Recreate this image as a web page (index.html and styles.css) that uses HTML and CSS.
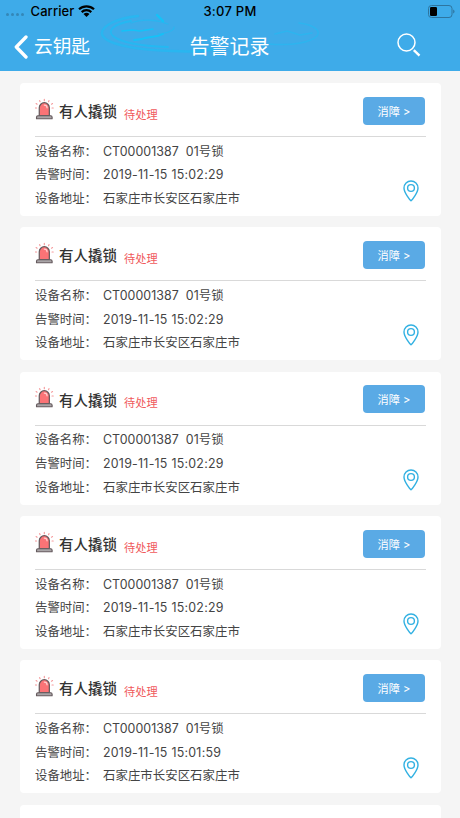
FILE: index.html
```html
<!DOCTYPE html>
<html lang="zh-CN">
<head>
    <meta charset="UTF-8">
    <meta name="viewport" content="width=device-width, initial-scale=1.0">
    <title>告警记录</title>
    <link rel="stylesheet" href="styles.css">
</head>
<body>
    <!-- Shared icons -->
    <svg class="icon-defs" width="0" height="0">
        <symbol id="alarm" viewBox="0 0 20 22">
            <path d="M4.500 18V9.700a5.300 5.300 0 0 1 10.600 0V18z" fill="#fb7376" stroke="#655a5d" stroke-width="1.300"/>
            <path d="M9.800 6.800c1.800 0 2.900 1.200 2.900 3" fill="none" stroke="#ffd0d0" stroke-width="1.300" stroke-linecap="round"/>
            <path d="M1.600 21.300v-1.700q0-1.500 1.500-1.500h13.400q1.500 0 1.500 1.500v1.700z" fill="#a9a5a7" stroke="#655a5d" stroke-width="1.200" stroke-linejoin="round"/>
            <path d="M9.800 .7v1.500M4.800 2.200l.6 1.100M14.800 2.200l-.6 1.100M1.200 5.300l1 .6M18.400 5.300l-1 .6M.4 10h1.300M17.900 10h1.300" stroke="#f69a9c" stroke-width="1.200" stroke-linecap="round"/>
        </symbol>
        <symbol id="pin" viewBox="0 0 16 22">
            <path d="M8 20.800C7 20 1 12.600 1 8a7 7 0 0 1 14 0c0 4.600-6 12-7 12.800z" fill="none" stroke="#32b1e2" stroke-width="1.400"/>
            <circle cx="8" cy="8" r="3.400" fill="none" stroke="#32b1e2" stroke-width="1.400"/>
        </symbol>
    </svg>

    <header class="header">
        <svg class="ripple" viewBox="0 0 230 60" width="230" height="60">
            <g fill="none" stroke="#14c2f8" stroke-linecap="round">
                <path d="M38 16C17 18 1 26 2 34c2 10 33 16 70 17 20 1 34 0 43-2" stroke-width="2.500" opacity=".5"/>
                <path d="M31 21C13 24 7 31 13 36c8 7 29 10 55 11" stroke-width="1.800" opacity=".6"/>
                <path d="M22 31l10-1 8 1 13-2" stroke-width="1.500"/>
                <path d="M34 40l8-1 3-1 13-2 5-2" stroke-width="1.800"/>
                <path d="M68 24c-13-5-27-5-37-1M58 34c10-1 16-3 16-7" stroke-width="1.200" opacity=".5"/>
                <path d="M57 15l6 6" stroke-width="2.400"/>
                <path d="M175 34l12-3 13 4 12-2M169 44c25 2 42-2 48-8 4-5-2-11-18-13" stroke-width="1.500" opacity=".4"/>
                <path d="M150 17h2" stroke-width="2" opacity=".7"/>
            </g>
        </svg>
        <div class="status-bar">
            <div class="status-left">
                <span class="signal"><i></i><i></i><i></i><i></i></span>
                <span>Carrier</span>
                <svg class="wifi" viewBox="0 0 17 12" width="17" height="12">
                    <path d="M1 4.300a11 11 0 0 1 15 0M3.700 7.100a7 7 0 0 1 9.600 0" fill="none" stroke="#000" stroke-width="2.200"/>
                    <path d="M5.500 9q3-2.500 6 0l-3 3z"/>
                </svg>
            </div>
            <span class="clock">3:07 PM</span>
            <svg class="battery" viewBox="0 0 27 13" width="27" height="13">
                <rect x=".5" y=".5" width="23.500" height="12" rx="3" fill="none" stroke="#2e759f"/>
                <rect x="2" y="2" width="7" height="9" rx="1.300"/>
                <path d="M25.200 4.500q1.300.500 1.300 2t-1.300 2z" fill="#2e759f"/>
            </svg>
        </div>
        <nav class="nav-bar">
            <a class="back">
                <svg viewBox="0 0 14 24" width="14" height="24">
                    <path d="M12 2L2.300 12 12 22" fill="none" stroke="#fff" stroke-width="3.300" stroke-linecap="round" stroke-linejoin="round"/>
                </svg>
                <span>云钥匙</span>
            </a>
            <h1>告警记录</h1>
            <svg class="search" viewBox="0 0 24 24" width="24" height="24">
                <circle cx="9.500" cy="9.500" r="8.500" fill="none" stroke="#fff" stroke-width="1.500"/>
                <path d="M16.800 17.200l5.700 5.500" stroke="#fff" stroke-width="2.400"/>
            </svg>
        </nav>
    </header>

    <main class="list">
        <section class="card">
            <div class="card-head">
                <svg class="alarm"><use href="#alarm"/></svg>
                <h2>有人撬锁</h2>
                <span class="state">待处理</span>
                <button class="clear-btn">消障 &gt;</button>
            </div>
            <div class="card-body">
                <dl>
                    <dt>设备名称：</dt><dd>CT00001387&nbsp; 01号锁</dd>
                    <dt>告警时间：</dt><dd class="time">2019-11-15 15:02:29</dd>
                    <dt>设备地址：</dt><dd>石家庄市长安区石家庄市</dd>
                </dl>
                <svg class="pin"><use href="#pin"/></svg>
            </div>
        </section>

        <section class="card">
            <div class="card-head">
                <svg class="alarm"><use href="#alarm"/></svg>
                <h2>有人撬锁</h2>
                <span class="state">待处理</span>
                <button class="clear-btn">消障 &gt;</button>
            </div>
            <div class="card-body">
                <dl>
                    <dt>设备名称：</dt><dd>CT00001387&nbsp; 01号锁</dd>
                    <dt>告警时间：</dt><dd class="time">2019-11-15 15:02:29</dd>
                    <dt>设备地址：</dt><dd>石家庄市长安区石家庄市</dd>
                </dl>
                <svg class="pin"><use href="#pin"/></svg>
            </div>
        </section>

        <section class="card">
            <div class="card-head">
                <svg class="alarm"><use href="#alarm"/></svg>
                <h2>有人撬锁</h2>
                <span class="state">待处理</span>
                <button class="clear-btn">消障 &gt;</button>
            </div>
            <div class="card-body">
                <dl>
                    <dt>设备名称：</dt><dd>CT00001387&nbsp; 01号锁</dd>
                    <dt>告警时间：</dt><dd class="time">2019-11-15 15:02:29</dd>
                    <dt>设备地址：</dt><dd>石家庄市长安区石家庄市</dd>
                </dl>
                <svg class="pin"><use href="#pin"/></svg>
            </div>
        </section>

        <section class="card">
            <div class="card-head">
                <svg class="alarm"><use href="#alarm"/></svg>
                <h2>有人撬锁</h2>
                <span class="state">待处理</span>
                <button class="clear-btn">消障 &gt;</button>
            </div>
            <div class="card-body">
                <dl>
                    <dt>设备名称：</dt><dd>CT00001387&nbsp; 01号锁</dd>
                    <dt>告警时间：</dt><dd class="time">2019-11-15 15:02:29</dd>
                    <dt>设备地址：</dt><dd>石家庄市长安区石家庄市</dd>
                </dl>
                <svg class="pin"><use href="#pin"/></svg>
            </div>
        </section>

        <section class="card">
            <div class="card-head">
                <svg class="alarm"><use href="#alarm"/></svg>
                <h2>有人撬锁</h2>
                <span class="state">待处理</span>
                <button class="clear-btn">消障 &gt;</button>
            </div>
            <div class="card-body">
                <dl>
                    <dt>设备名称：</dt><dd>CT00001387&nbsp; 01号锁</dd>
                    <dt>告警时间：</dt><dd class="time">2019-11-15 15:01:59</dd>
                    <dt>设备地址：</dt><dd>石家庄市长安区石家庄市</dd>
                </dl>
                <svg class="pin"><use href="#pin"/></svg>
            </div>
        </section>

        <!-- Top edge of the next card -->
        <section class="card card-peek"></section>
    </main>
</body>
</html>
```
FILE: styles.css
```css
* {
    box-sizing: border-box;
}

body {
    font-family: Inter, "Noto Sans CJK SC", sans-serif;
    margin: 0;
    display: flex;
    flex-direction: column;
    height: 100vh;
    background: #f5f5f5;
    color: #444;
}

h1, h2, dl, dd {
    margin: 0;
}

.icon-defs {
    position: absolute;
}

/* Header */
.header {
    position: relative;
    flex: none;
    height: 71px;
    background: #3eabe9;
}

.ripple {
    position: absolute;
    left: 100px;
    top: 0;
}

.status-bar {
    position: relative;
    display: grid;
    grid-template-columns: 1fr auto 1fr;
    align-items: center;
    height: 22px;
    padding: 0 6px;
    color: #000;
    font-size: 13px;
    font-weight: 500;
}

.status-left {
    display: flex;
    align-items: center;
    letter-spacing: 0.1px;
}

.signal {
    display: flex;
    gap: 2px;
    width: 24.5px;
    padding-top: 7px;
}

.signal i {
    width: 3px;
    height: 3px;
    border-radius: 50%;
    background: #3487b8;
}

.wifi {
    margin-left: 4px;
}

.clock {
    letter-spacing: 0.25px;
}

.battery {
    justify-self: end;
    margin-right: -1px;
}

.nav-bar {
    position: relative;
    display: grid;
    grid-template-columns: 1fr auto 1fr;
    align-items: center;
    height: 50px;
    padding: 0 39px 0 14px;
    color: #fff;
}

.back {
    display: flex;
    align-items: center;
    gap: 6px;
    font-size: 18.7px;
    line-height: 28px;
}

.nav-bar h1 {
    margin-left: 24px;
    font-size: 20px;
    font-weight: 400;
    line-height: 28px;
}

.search {
    justify-self: end;
    margin-bottom: 4px;
}

/* Alarm list */
.list {
    display: flex;
    flex: 1;
    flex-direction: column;
    gap: 11.35px;
    min-height: 0;
    padding: 12px 19.5px 0 20px;
}

.card {
    flex: none;
    height: 133px;
    padding: 0 15px;
    background: #fff;
    border-radius: 4px;
}

.card-peek {
    flex: 1;
    height: auto;
    border-radius: 4px 4px 0 0;
}

.card-head {
    display: flex;
    align-items: center;
    height: 54px;
    padding-top: 2px;
    border-bottom: 1px solid #d9d9d9;
}

.alarm {
    width: 19px;
    height: 22px;
    margin-bottom: 4px;
}

.card-head h2 {
    margin-left: 5px;
    font-size: 14.5px;
    font-weight: 500;
    color: #333;
}

.state {
    margin: 6px 0 0 7px;
    font-size: 11.2px;
    color: #f0595c;
}

.clear-btn {
    width: 62px;
    height: 28px;
    margin: 0 0.5px 0 auto;
    padding: 0;
    border: 0;
    border-radius: 4px;
    background: #5aaae5;
    color: #fff;
    font-family: inherit;
    font-size: 11.2px;
}

.card-body {
    display: flex;
    justify-content: space-between;
    padding-top: 2.5px;
}

.card-body dl {
    display: grid;
    grid-template-columns: 68px auto;
    font-size: 12.4px;
    line-height: 23.8px;
}

.card-body dt {
    font-family: "Noto Sans CJK SC", sans-serif;
}

.card-body dd {
    letter-spacing: 0.05px;
}

.card-body .time {
    letter-spacing: 0.25px;
}

.pin {
    width: 16px;
    height: 22px;
    margin: 40.5px 6.5px 0 0;
}
```
